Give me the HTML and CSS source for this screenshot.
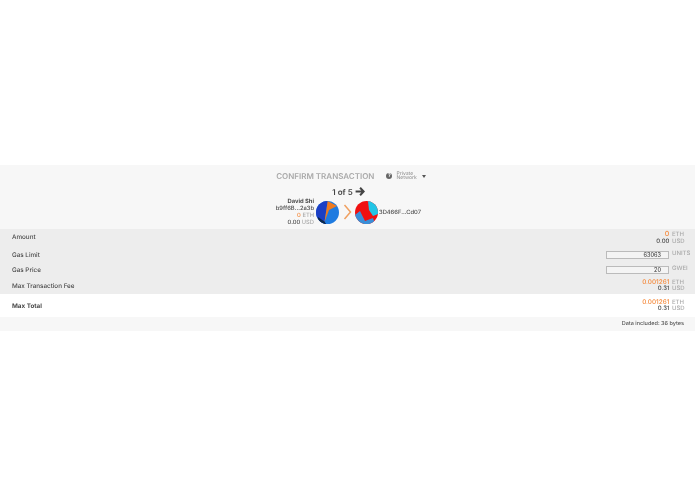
FILE: index.html
```html
<!DOCTYPE html>
<html lang="en">
<head>
    <meta charset="UTF-8">
    <title>Confirm Transaction</title>
    <link rel="stylesheet" href="styles.css">
</head>
<body>
<div class="confirm">
    <div class="header">
        <div class="title-row">
            <h1>CONFIRM TRANSACTION</h1>
            <span class="help">?</span>
            <span class="network">Private<br>Network</span>
            <span class="caret"></span>
        </div>
        <div class="pager">1 of 5
            <svg class="next" width="10" height="9" viewBox="0 0 11 10">
                <path d="M5.6 0.8 L9.6 5 L5.6 9.2 M9 5 L0.6 5" fill="none" stroke="#444" stroke-width="2.2"/>
            </svg>
        </div>
        <div class="parties">
            <div class="from">
                <b>David Shi</b>
                <span>b9ff6B...2a3b</span>
                <span><i class="orange">0</i> <em>ETH</em></span>
                <span>0.00 <em>USD</em></span>
            </div>
            <svg class="identicon" width="23" height="23" viewBox="0 0 23 23">
                <clipPath id="disc-a"><circle cx="11.5" cy="11.5" r="11.5"/></clipPath>
                <g clip-path="url(#disc-a)">
                    <rect width="23" height="23" fill="#1f7be0"/>
                    <polygon points="0,0 11.7,0 8.5,21 10,23 0,23" fill="#1c3fc4"/>
                    <polygon points="2,16 8.5,20.5 10,23 2,23" fill="#0d2a4a"/>
                    <polygon points="11.7,0 21,5 13,9 8.5,21" fill="#f07a1e"/>
                </g>
            </svg>
            <svg class="chevron" width="9" height="16" viewBox="0 0 9 16">
                <path d="M1.5 1 L7.5 8 L1.5 15" fill="none" stroke="#f0a060" stroke-width="1.5"/>
            </svg>
            <svg class="identicon" width="23" height="23" viewBox="0 0 23 23">
                <clipPath id="disc-b"><circle cx="11.5" cy="11.5" r="11.5"/></clipPath>
                <g clip-path="url(#disc-b)">
                    <rect width="23" height="23" fill="#f01010"/>
                    <polygon points="13,0 23,0 23,13 18,15 14,9" fill="#22c5e6"/>
                    <polygon points="0,14 5,10 10,20 18,17 20,23 0,23" fill="#3a8fd8"/>
                </g>
            </svg>
            <div class="to">3D466F...Cd07</div>
        </div>
    </div>
    <div class="rows">
        <div class="row amount">
            <span class="label">Amount</span>
            <div class="value"><span><i class="orange big">0</i> <em>ETH</em></span><span>0.00 <em>USD</em></span></div>
        </div>
        <div class="row limit">
            <span>Gas Limit</span>
            <div class="field"><input value="63063" readonly><em>UNITS</em></div>
        </div>
        <div class="row price">
            <span>Gas Price</span>
            <div class="field"><input value="20" readonly><em>GWEI</em></div>
        </div>
        <div class="row fee">
            <span>Max Transaction Fee</span>
            <div class="value"><span><i class="orange">0.001261</i> <em>ETH</em></span><span>0.31 <em>USD</em></span></div>
        </div>
    </div>
    <div class="row total">
        <b>Max Total</b>
        <div class="value"><span><i class="orange">0.001261</i> <em>ETH</em></span><span>0.31 <em>USD</em></span></div>
    </div>
    <div class="data">Data included: 36 bytes</div>
</div>
</body>
</html>
```
FILE: styles.css
```css
body {
    margin: 0;
    padding-top: 165px;
    font-family: 'Inter', 'Liberation Sans', sans-serif;
    font-size: 5.8px;
    font-weight: 500;
    color: #4a4a4a;
    background-color: #fff;
    text-rendering: geometricPrecision;
}

/* the reference is a soft, upscaled capture */
.confirm {
    filter: blur(0.3px);
}

em, i {
    font-style: normal;
}

em {
    color: #aaa;
}

.orange {
    color: #f58a3c;
}

.big {
    font-size: 7px;
}

.header {
    height: 64px;
    background-color: #f7f7f7;
    display: flex;
    flex-direction: column;
    align-items: center;
}

.title-row {
    display: flex;
    align-items: center;
    height: 22px;
    margin-left: 7px;
}

h1 {
    margin: 0 12px 0 0;
    font-size: 8px;
    font-weight: 600;
    color: #a9a9a9;
}

.help {
    width: 6px;
    height: 6px;
    border-radius: 50%;
    background-color: #666;
    color: #f7f7f7;
    font-size: 5px;
    font-weight: 700;
    line-height: 6px;
    text-align: center;
    margin-right: 4px;
}

.network {
    font-size: 5px;
    line-height: 4.5px;
    color: #999;
    margin-right: 5px;
}

.caret {
    border-left: 2.5px solid transparent;
    border-right: 2.5px solid transparent;
    border-top: 3px solid #555;
}

.pager {
    display: flex;
    align-items: center;
    gap: 2px;
    height: 11px;
    margin: -1px 0 1px 2px;
    font-size: 8px;
    font-weight: 600;
    color: #444;
}

.parties {
    display: flex;
    align-items: center;
}

.from {
    display: flex;
    flex-direction: column;
    align-items: flex-end;
    line-height: 7px;
    width: 38px;
    margin-right: 2px;
    white-space: nowrap;
}

.from b {
    font-weight: 700;
}

.chevron {
    margin: 0 3px 0 4px;
}

.to {
    width: 40px;
    margin-left: 1px;
    white-space: nowrap;
}

.rows {
    background-color: #ededed;
    height: 65px;
    display: flex;
    flex-direction: column;
}

.row {
    display: flex;
    justify-content: space-between;
    align-items: center;
    padding: 0 11px 0 12px;
    font-size: 6.3px;
}

.amount {
    height: 18px;
}

.amount .label {
    margin-bottom: 2px;
}

.limit, .price {
    height: 15px;
}

.fee {
    height: 17px;
}

.total {
    height: 23px;
    background-color: #fff;
}

.total b {
    font-weight: 700;
}

.value {
    display: flex;
    flex-direction: column;
    align-items: flex-end;
    font-size: 6px;
    line-height: 6.5px;
}

.value > span {
    white-space: nowrap;
}

.value .orange:not(.big) {
    font-size: 6.4px;
}

.value em {
    display: inline-block;
    width: 12px;
    margin-left: 1px;
}

.field {
    display: flex;
    align-items: flex-start;
    gap: 3px;
    font-size: 6px;
    width: 78px;
}

.field input {
    box-sizing: border-box;
    width: 63px;
    height: 8px;
    margin-top: 1px;
    padding: 0 7px 0 0;
    border: 1px solid #bbb;
    border-radius: 0;
    background-color: #f4f4f4;
    font-family: inherit;
    font-size: 5.5px;
    font-weight: 500;
    color: #444;
    text-align: right;
}

.data {
    height: 14px;
    line-height: 15px;
    background-color: #f7f7f7;
    text-align: right;
    padding-right: 11px;
    font-size: 5.5px;
    color: #555;
}
```
